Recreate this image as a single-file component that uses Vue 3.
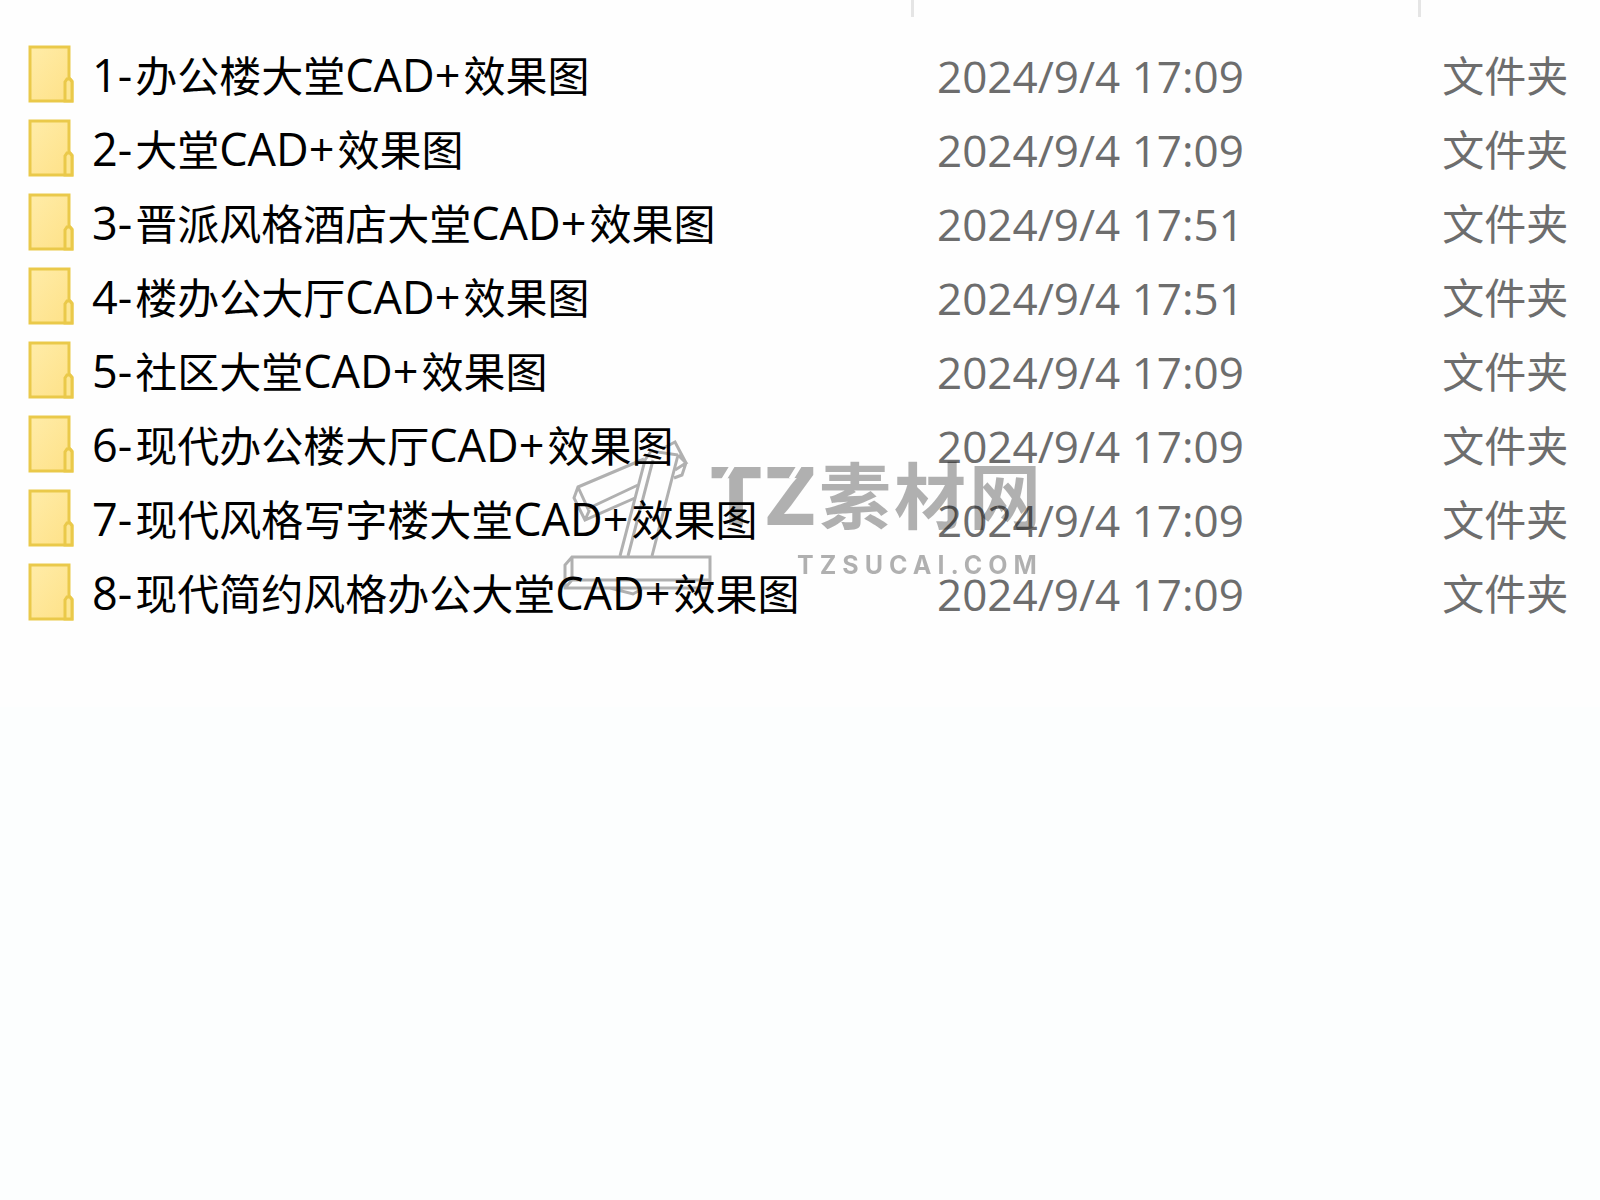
<!-- src/App.vue -->

<script setup>
const folders = [
  { name: '1-办公楼大堂CAD+效果图', modified: '2024/9/4 17:09' },
  { name: '2-大堂CAD+效果图', modified: '2024/9/4 17:09' },
  { name: '3-晋派风格酒店大堂CAD+效果图', modified: '2024/9/4 17:51' },
  { name: '4-楼办公大厅CAD+效果图', modified: '2024/9/4 17:51' },
  { name: '5-社区大堂CAD+效果图', modified: '2024/9/4 17:09' },
  { name: '6-现代办公楼大厅CAD+效果图', modified: '2024/9/4 17:09' },
  { name: '7-现代风格写字楼大堂CAD+效果图', modified: '2024/9/4 17:09' },
  { name: '8-现代简约风格办公大堂CAD+效果图', modified: '2024/9/4 17:09' },
];

// Latin and Chinese runs are set in different sizes
const runs = (text) =>
  text.match(/[\x20-\x7e]+|[^\x20-\x7e]+/g).map((part) => ({
    part,
    latin: /^[\x20-\x7e]/.test(part),
  }));
</script>

<template>
  <main class="explorer">
    <div class="listing">
      <table class="files">
        <colgroup>
          <col class="col-name" />
          <col class="col-date" />
          <col />
        </colgroup>
        <thead>
          <tr>
            <th></th>
            <th></th>
            <th></th>
          </tr>
        </thead>
        <tbody>
          <tr v-for="folder in folders" :key="folder.name">
            <td>
              <div class="entry">
                <svg class="folder" viewBox="0 0 46 58" aria-hidden="true">
                  <defs>
                    <linearGradient id="folder-fill" x1="0" y1="0" x2="1" y2="1">
                      <stop offset="0" stop-color="#ffeca8" />
                      <stop offset="1" stop-color="#fee187" />
                    </linearGradient>
                  </defs>
                  <path d="M2 2H41V33L44 36V56H2Z" fill="url(#folder-fill)" stroke="#eac94a" stroke-width="3" />
                  <path d="M37 56V37L39 34H42L44 37V56Z" fill="#fde692" stroke="#eac94a" stroke-width="3" />
                </svg>
                <span class="name"><span v-for="(run, i) in runs(folder.name)" :key="i" :class="{ latin: run.latin }">{{ run.part }}</span></span>
              </div>
            </td>
            <td class="date">{{ folder.modified }}</td>
            <td class="type">文件夹</td>
          </tr>
        </tbody>
      </table>

      <svg class="watermark" viewBox="0 0 476 156">
        <defs>
          <!-- diagonal stencil cuts through the T and the Z -->
          <mask id="stencil" maskUnits="userSpaceOnUse" x="130" y="0" width="130" height="100">
            <rect x="130" y="0" width="130" height="100" fill="#fff" />
            <path d="M170 22L159 40 M237 22L227 38" stroke="#000" stroke-width="5" />
          </mask>
        </defs>
        <g fill="none" stroke="#000" stroke-width="3">
          <!-- base -->
          <path d="M8 116H146V147H1V124Z M8 116V139H146 M8 139L1 147 M46 147L69 153L78 148" />
          <!-- post -->
          <path d="M56 115L81 19L87 10L114 14 M64 115L89 19 M88 115L114 14" />
          <!-- head -->
          <path d="M98 8L111 1L122 22L118 34L110 37 M114 14L122 22L111 29" />
          <!-- arm -->
          <path d="M80 18L14 46L10 57L21 79L71 57 M14 46L25 70L21 79 M23 68L74 44" />
        </g>
        <text class="brand" x="145" y="84" mask="url(#stencil)">TZ</text>
        <text class="brand-cn" x="255" y="82">素材网</text>
        <text class="domain" x="233" y="133">TZSUCAI.COM</text>
      </svg>
    </div>
  </main>
</template>

<style>
body { margin: 0; background: #fcfefe; }
</style>

<style scoped>
.explorer { font-family: "Open Sans", "Noto Sans CJK SC", sans-serif; color: #000; }
.listing { position: relative; padding-bottom: 76px; background: #fefefe; }
.files { width: 100%; table-layout: fixed; border-collapse: collapse; }
.col-name { width: 57%; }
.col-date { width: 31.7%; }
th { height: 17px; padding: 0; border-right: 3px solid #e5e5e5; }
th:last-child { border-right: 0; }
td { height: 74px; padding: 0; white-space: nowrap; line-height: 74px; }
tbody::before { content: ""; display: block; height: 22px; }
.entry { display: flex; align-items: center; gap: 18px; padding-left: 28px; }
.folder { width: 46px; height: 58px; flex: none; margin-bottom: 4px; }
.name { font-size: 42px; }
.latin { padding-right: 3px; font-size: 45px; line-height: 42px; }
.date { padding-left: 25px; font-size: 44px; color: #6d6d6d; }
.type { padding-left: 23px; font-size: 42px; color: #6d6d6d; }
.watermark { position: absolute; top: 441px; left: 50%; width: 476px; height: 156px; margin-left: -236px; overflow: visible; opacity: 0.3; pointer-events: none; }
.brand { font: 800 80px Inter, sans-serif; }
.brand-cn { font: 700 72px "Noto Sans CJK SC", sans-serif; letter-spacing: 3px; }
.domain { font: 700 25px Inter, sans-serif; letter-spacing: 6px; }
</style>
